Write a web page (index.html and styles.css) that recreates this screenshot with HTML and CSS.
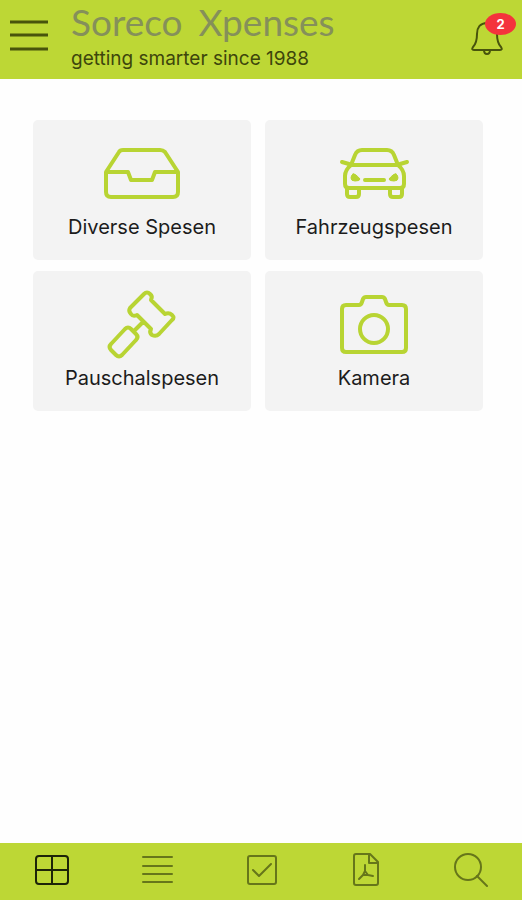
FILE: index.html
```html
<!DOCTYPE html>
<html lang="de">
<head>
<meta charset="utf-8">
<meta name="viewport" content="width=device-width, initial-scale=1">
<title>Soreco Xpenses</title>
<link rel="stylesheet" href="styles.css">
</head>
<body>
<header class="topbar">
  <button class="icon-button" type="button" aria-label="Menu">
    <svg class="menu-icon" width="40" height="32" viewBox="0 0 40 32"><path d="M1 3h38M1 16h38M1 30h38"/></svg>
  </button>
  <div class="brand">
    <h1 class="brand-name"><span>Soreco</span> <span>Xpenses</span></h1>
    <p class="brand-claim">getting smarter since 1988</p>
  </div>
  <button class="icon-button alerts" type="button" aria-label="Notifications">
    <svg width="34" height="36" viewBox="0 0 34 36"><path d="M17 4C10 4 7 9 7 15C7 22 6 25 3 28Q1 31 4 31H30Q33 31 31 28C28 25 27 22 27 15C27 9 24 4 17 4ZM14 31Q14 35 17 35T20 31"/></svg>
    <span class="badge">2</span>
  </button>
</header>
<main class="tiles">
  <button class="tile" type="button">
    <svg width="80" height="72" viewBox="0 0 80 72"><path d="M4 34L17 14Q18 12 21 12H58Q61 12 63 14L76 34V54Q76 59 71 59H9Q4 59 4 54V34H26L29 42H50L53 34H76"/></svg>
    <span>Diverse Spesen</span>
  </button>
  <button class="tile" type="button">
    <svg width="80" height="72" viewBox="0 0 80 72"><path d="M17 27L21 17Q23 12 28 12H53Q58 12 60 17L64 27ZM17 27Q11 32 11 38V46Q11 50 15 50H66Q70 50 70 46V38Q70 32 64 27M13 50V56Q13 59 16 59H22Q25 59 25 56V50M56 50V56Q56 59 59 59H65Q68 59 68 56V50M31 42H50M8 24L15 26M73 24L66 26"/><path class="solid" d="M19 36Q21 35 26 41Q26 43 21 43Q17 43 17 40Q17 37 19 36ZM62 36Q60 35 55 41Q55 43 60 43Q64 43 64 40Q64 37 62 36Z"/></svg>
    <span>Fahrzeugspesen</span>
  </button>
  <button class="tile" type="button">
    <svg width="80" height="72" viewBox="0 0 80 72"><path d="M42 5Q45 2 48 5Q51 7 49 11L63 25Q67 23 70 26T70 31L57 45Q54 48 50 46Q47 44 49 40L35 26Q31 28 29 25Q26 22 28 19ZM41 33L33 41M23 40Q26 37 29 40L34 45Q37 48 34 51L20 66Q17 69 14 66L9 61Q6 58 9 55Z"/></svg>
    <span>Pauschalspesen</span>
  </button>
  <button class="tile" type="button">
    <svg width="80" height="72" viewBox="0 0 80 72"><path d="M12 16H25Q27 16 28 13L29 10Q30 8 32 8H48Q50 8 51 10L52 13Q53 16 55 16H68Q72 16 72 20V59Q72 63 68 63H12Q8 63 8 59V20Q8 16 12 16Z"/><circle cx="40" cy="40" r="14"/></svg>
    <span>Kamera</span>
  </button>
</main>
<nav class="tabs" aria-label="Navigation">
  <button class="tab active" type="button" aria-label="Overview">
    <svg width="36" height="36" viewBox="0 0 36 36"><rect x="2" y="4" width="32" height="28" rx="3"/><path d="M18 4v28M2 18h32"/></svg>
  </button>
  <button class="tab" type="button" aria-label="List">
    <svg width="36" height="36" viewBox="0 0 36 36"><path d="M4 5h29M4 14h29M4 22h29M4 30h29"/></svg>
  </button>
  <button class="tab" type="button" aria-label="Approvals">
    <svg width="36" height="36" viewBox="0 0 36 36"><rect x="5" y="4" width="28" height="28" rx="2"/><path d="M10 18l6 6l12-12"/></svg>
  </button>
  <button class="tab" type="button" aria-label="PDF">
    <svg width="36" height="36" viewBox="0 0 36 36"><path d="M9 2H23L31 10V31Q31 33 29 33H9Q7 33 7 31V4Q7 2 9 2ZM22 2V11H31M18 13V19M16 23L12 27M21 23L26 24M18 19L16 23L21 23Z"/></svg>
  </button>
  <button class="tab" type="button" aria-label="Search">
    <svg width="36" height="36" viewBox="0 0 36 36"><circle cx="16" cy="15" r="13"/><path d="M25 24l10 10"/></svg>
  </button>
</nav>
</body>
</html>
```

FILE: styles.css
```css
* { box-sizing: border-box; }

body {
  margin: 0;
  min-height: 100vh;
  display: flex;
  flex-direction: column;
  background: #fefefe;
  color: #1c1c1c;
  font-family: Inter, "Liberation Sans", sans-serif;
}

button {
  border: 0;
  padding: 0;
  background: none;
  color: inherit;
  font: inherit;
  cursor: pointer;
}

svg {
  display: block;
  fill: none;
  stroke: currentColor;
  stroke-width: 2;
  stroke-linecap: round;
  stroke-linejoin: round;
}

.topbar {
  display: flex;
  align-items: flex-start;
  height: 79px;
  padding: 0 18px 0 9px;
  background: #bdd735;
}

.icon-button {
  position: relative;
  margin-top: 19px;
  color: #48540c;
}

.menu-icon {
  stroke-width: 3;
  stroke-linecap: butt;
}

.brand {
  flex: 1;
  padding: 1px 0 0 22px;
}

.brand-name {
  display: flex;
  gap: 16px;
  margin: 0;
  color: #85905a;
  font: 400 37px/42px Lato, sans-serif;
}

.brand-claim {
  margin: 4px 0 0;
  color: #3d460c;
  font-size: 19px;
  line-height: 24px;
}

.badge {
  position: absolute;
  top: -6px;
  right: -12px;
  width: 31px;
  height: 22px;
  border-radius: 50%;
  background: #f4333c;
  color: #fff;
  font-size: 13px;
  font-weight: 700;
  line-height: 22px;
  text-align: center;
}

.tiles {
  flex: 1;
  display: grid;
  grid-template-columns: 1fr 1fr;
  align-content: start;
  gap: 11px 14px;
  padding: 41px 39px 24px 33px;
}

.tile {
  display: flex;
  flex-direction: column;
  align-items: center;
  gap: 5px;
  padding: 18px 8px 21px;
  border-radius: 5px;
  background: #f3f3f3;
  font-size: 20px;
  line-height: 24px;
}

.tile svg {
  color: #b8d433;
  stroke-width: 4;
}

.tile .solid {
  fill: currentColor;
  stroke-width: 1;
}

.tabs {
  display: grid;
  grid-template-columns: repeat(5, 1fr);
  height: 57px;
  background: #bdd735;
}

.tab {
  display: flex;
  justify-content: center;
  padding-top: 9px;
  color: #66761a;
}

.tab.active { color: #1d2408; }
```
